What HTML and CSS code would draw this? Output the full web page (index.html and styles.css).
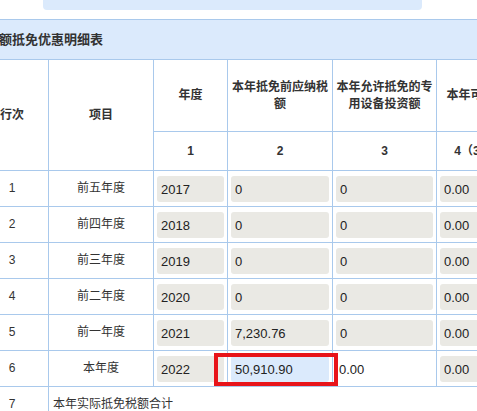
FILE: index.html
```html
<!DOCTYPE html>
<html lang="zh-CN">
<head>
<meta charset="utf-8">
<title>税额抵免优惠明细表</title>
<link rel="stylesheet" href="styles.css">
</head>
<body>
<div class="page">
  <div class="topbar"></div>
  <div class="sheet">
    <div class="title">税额抵免优惠明细表</div>
    <div class="grid">
      <div class="cell head span2">行次</div>
      <div class="cell head span2">项目</div>
      <div class="cell head">年度</div>
      <div class="cell head">本年抵免前应纳税额</div>
      <div class="cell head">本年允许抵免的专用设备投资额</div>
      <div class="cell head">本年可抵免税额</div>
      <div class="cell head num">1</div>
      <div class="cell head num">2</div>
      <div class="cell head num">3</div>
      <div class="cell head num">4（3×10%）</div>

      <div class="cell">1</div>
      <div class="cell">前五年度</div>
      <div class="cell field"><input class="inp" value="2017" readonly></div>
      <div class="cell field"><input class="inp" value="0" readonly></div>
      <div class="cell field"><input class="inp" value="0" readonly></div>
      <div class="cell field"><input class="inp" value="0.00" readonly></div>

      <div class="cell">2</div>
      <div class="cell">前四年度</div>
      <div class="cell field"><input class="inp" value="2018" readonly></div>
      <div class="cell field"><input class="inp" value="0" readonly></div>
      <div class="cell field"><input class="inp" value="0" readonly></div>
      <div class="cell field"><input class="inp" value="0.00" readonly></div>

      <div class="cell">3</div>
      <div class="cell">前三年度</div>
      <div class="cell field"><input class="inp" value="2019" readonly></div>
      <div class="cell field"><input class="inp" value="0" readonly></div>
      <div class="cell field"><input class="inp" value="0" readonly></div>
      <div class="cell field"><input class="inp" value="0.00" readonly></div>

      <div class="cell">4</div>
      <div class="cell">前二年度</div>
      <div class="cell field"><input class="inp" value="2020" readonly></div>
      <div class="cell field"><input class="inp" value="0" readonly></div>
      <div class="cell field"><input class="inp" value="0" readonly></div>
      <div class="cell field"><input class="inp" value="0.00" readonly></div>

      <div class="cell">5</div>
      <div class="cell">前一年度</div>
      <div class="cell field"><input class="inp" value="2021" readonly></div>
      <div class="cell field"><input class="inp" value="7,230.76" readonly></div>
      <div class="cell field"><input class="inp" value="0" readonly></div>
      <div class="cell field"><input class="inp" value="0.00" readonly></div>

      <div class="cell">6</div>
      <div class="cell">本年度</div>
      <div class="cell field"><input class="inp" value="2022" readonly></div>
      <div class="cell field"><input class="inp active" value="50,910.90"></div>
      <div class="cell field"><input class="inp plain" value="0.00" readonly></div>
      <div class="cell field"><input class="inp" value="0.00" readonly></div>

      <div class="cell">7</div>
      <div class="cell total">本年实际抵免税额合计</div>
    </div>
  </div>
  <div class="mark"></div>
</div>
</body>
</html>
```
FILE: styles.css
```css
html, body {
  margin: 0;
  padding: 0;
  overflow: hidden;
  background: #fff;
}
body {
  width: 477px;
  height: 411px;
  font-family: "Liberation Sans", "Noto Sans CJK SC", sans-serif;
  font-size: 12px;
  color: #333;
}
.page {
  position: relative;
  width: 477px;
  height: 411px;
  overflow: hidden;
}
.topbar {
  margin-left: 43px;
  width: 379px;
  height: 10px;
  background: #dbeafc;
  border-radius: 0 0 4px 4px;
}
.sheet {
  margin-top: 9px;
  margin-left: -24px;
  width: 600px;
}
.title {
  box-sizing: border-box;
  height: 41px;
  line-height: 39px;
  border-top: 1px solid #a9c9ec;
  border-bottom: 1px solid #a9c9ec;
  background: #dbeafc;
  padding-left: 10px;
  font-size: 13px;
  font-weight: bold;
  color: #333;
  white-space: nowrap;
}
.grid {
  display: grid;
  grid-template-columns: 73px 105px 74px 105px 104px 104px;
  grid-template-rows: 72px 39px repeat(7, 36px);
}
.cell {
  box-sizing: border-box;
  border-right: 1px solid #a9c9ec;
  border-bottom: 1px solid #a9c9ec;
  display: flex;
  align-items: center;
  justify-content: center;
  text-align: center;
  line-height: 17px;
  padding: 0 3px;
  min-width: 0;
}
.head {
  font-weight: bold;
}
.span2 {
  grid-row: span 2;
}
.num {
  white-space: nowrap;
}
.field {
  padding: 5px 3px 4px 3px;
  align-items: stretch;
}
.inp {
  box-sizing: border-box;
  width: 100%;
  height: 26px;
  margin: 0;
  border: none;
  border-radius: 3px;
  padding: 0 4px;
  background: #eae9e4;
  font-family: "Liberation Sans", sans-serif;
  font-size: 13px;
  color: #222;
  outline: none;
}
.inp.active {
  background: #dbeafc;
}
.inp.plain {
  background: #fff;
  padding-left: 3px;
}
.total {
  grid-column: 2 / -1;
  justify-content: flex-start;
  padding-left: 4px;
}
.mark {
  position: absolute;
  left: 214px;
  top: 353px;
  width: 124px;
  height: 33px;
  box-sizing: border-box;
  border: 4px solid #e8141a;
}
```
